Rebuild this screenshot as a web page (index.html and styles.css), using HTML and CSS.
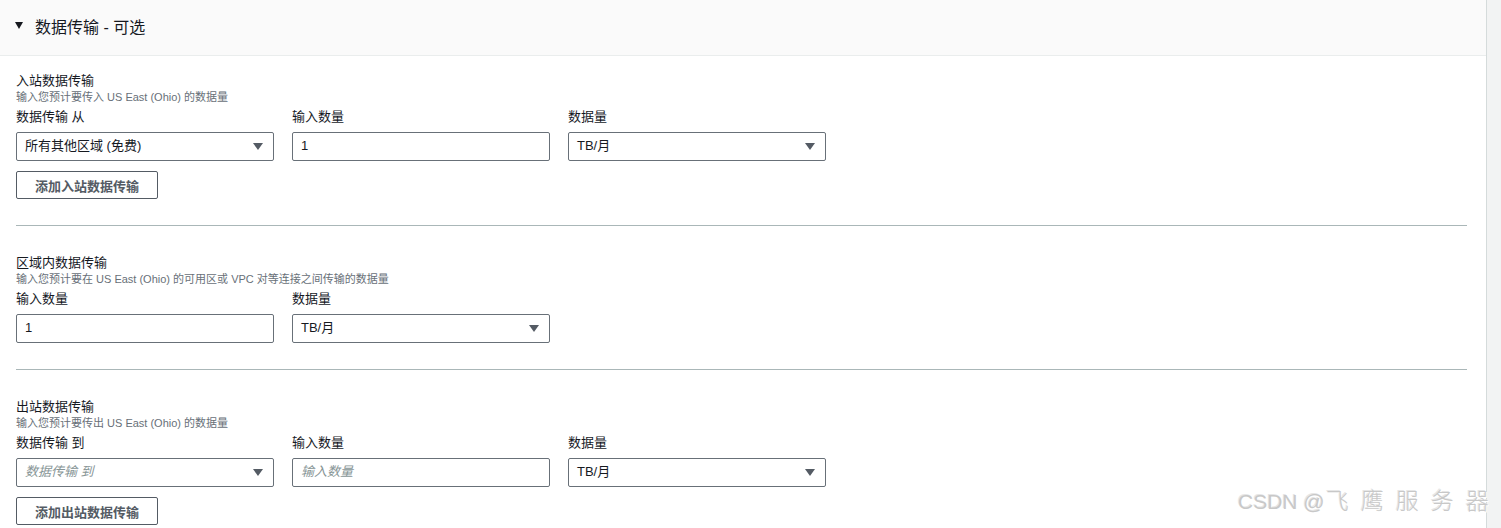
FILE: index.html
```html
<!DOCTYPE html>
<html lang="zh-CN">
<head>
    <meta charset="UTF-8">
    <meta name="viewport" content="width=device-width, initial-scale=1.0">
    <title>数据传输 - 可选</title>
    <link rel="stylesheet" href="styles.css">
</head>
<body>
    <div class="page">
        <div class="panel">
            <!-- 面板标题 -->
            <div class="panel-header">
                <span class="caret"></span>
                <h2>数据传输 - 可选</h2>
            </div>

            <!-- 入站数据传输 -->
            <section class="transfer">
                <div class="transfer-title">入站数据传输</div>
                <div class="transfer-desc">输入您预计要传入 US East (Ohio) 的数据量</div>
                <div class="field-row">
                    <div class="field">
                        <label>数据传输 从</label>
                        <div class="select">所有其他区域 (免费)</div>
                    </div>
                    <div class="field">
                        <label>输入数量</label>
                        <div class="input">1</div>
                    </div>
                    <div class="field">
                        <label>数据量</label>
                        <div class="select">TB/月</div>
                    </div>
                </div>
                <button type="button" class="btn">添加入站数据传输</button>
            </section>

            <!-- 区域内数据传输 -->
            <section class="transfer">
                <div class="transfer-title">区域内数据传输</div>
                <div class="transfer-desc">输入您预计要在 US East (Ohio) 的可用区或 VPC 对等连接之间传输的数据量</div>
                <div class="field-row">
                    <div class="field">
                        <label>输入数量</label>
                        <div class="input">1</div>
                    </div>
                    <div class="field">
                        <label>数据量</label>
                        <div class="select">TB/月</div>
                    </div>
                </div>
            </section>

            <!-- 出站数据传输 -->
            <section class="transfer">
                <div class="transfer-title">出站数据传输</div>
                <div class="transfer-desc">输入您预计要传出 US East (Ohio) 的数据量</div>
                <div class="field-row">
                    <div class="field">
                        <label>数据传输 到</label>
                        <div class="select placeholder">数据传输 到</div>
                    </div>
                    <div class="field">
                        <label>输入数量</label>
                        <div class="input placeholder">输入数量</div>
                    </div>
                    <div class="field">
                        <label>数据量</label>
                        <div class="select">TB/月</div>
                    </div>
                </div>
                <button type="button" class="btn">添加出站数据传输</button>
            </section>
        </div>
        <div class="scroll-gutter"></div>
        <div class="watermark">CSDN @<span class="watermark-cjk">飞鹰服务器</span></div>
    </div>
</body>
</html>
```

FILE: styles.css
```css
html, body {
    margin: 0;
    height: 100%;
    overflow: hidden;
}
body {
    font-family: "Liberation Sans", "Noto Sans CJK SC", sans-serif;
    color: #16191f;
    background-color: #ffffff;
}
.page {
    display: flex;
    height: 100%;
    position: relative;
}
.panel {
    flex: 1;
    border-right: 1px solid #d5dbdb;
}
.scroll-gutter {
    width: 14px;
    background-color: #f2f3f3;
}
.panel-header {
    display: flex;
    align-items: center;
    height: 55px;
    padding-left: 15px;
    background-color: #fafafa;
    border-bottom: 1px solid #eaeded;
}
.panel-header h2 {
    margin: 0 0 0 12px;
    font-size: 16px;
    font-weight: normal;
    line-height: 20px;
}
.caret {
    width: 0;
    height: 0;
    border-left: 4px solid transparent;
    border-right: 4px solid transparent;
    border-top: 7px solid #16191f;
    margin-top: -4px;
}
.transfer {
    margin: 0 19px 0 16px;
    padding: 28px 0 26px;
    border-bottom: 1px solid #aab7b8;
}
.transfer:first-of-type {
    padding-top: 16px;
}
.transfer-title {
    font-size: 13px;
    line-height: 17px;
}
.transfer-desc {
    font-size: 11px;
    line-height: 17px;
    color: #687078;
}
.field-row {
    display: grid;
    grid-template-columns: repeat(3, 258px);
    column-gap: 18px;
}
.field label {
    display: block;
    font-size: 13px;
    line-height: 22px;
    margin-bottom: 4px;
}
.input,
.select {
    position: relative;
    box-sizing: border-box;
    height: 29px;
    padding: 0 28px 2px 8px;
    border: 1px solid #687078;
    border-radius: 2px;
    font-size: 13px;
    line-height: 25px;
    white-space: nowrap;
}
.select::after {
    content: "";
    position: absolute;
    right: 10px;
    top: 10px;
    border-left: 5px solid transparent;
    border-right: 5px solid transparent;
    border-top: 7px solid #545b64;
}
.placeholder {
    font-style: italic;
    color: #879596;
}
.btn {
    margin-top: 10px;
    height: 28px;
    padding: 0 18px;
    background-color: #ffffff;
    border: 1px solid #545b64;
    border-radius: 2px;
    font-family: inherit;
    font-size: 13px;
    font-weight: bold;
    color: #545b64;
    cursor: pointer;
}
.watermark {
    position: absolute;
    left: 1238px;
    top: 486px;
    font-size: 21px;
    line-height: 30px;
    color: #c8c8c8;
    text-shadow: 1px 1px 0 #ffffff, -1px -1px 0 #e6e6e6;
    white-space: nowrap;
}
.watermark-cjk {
    margin-left: 1px;
    font-size: 23px;
    font-weight: 300;
    letter-spacing: 12px;
}
```
